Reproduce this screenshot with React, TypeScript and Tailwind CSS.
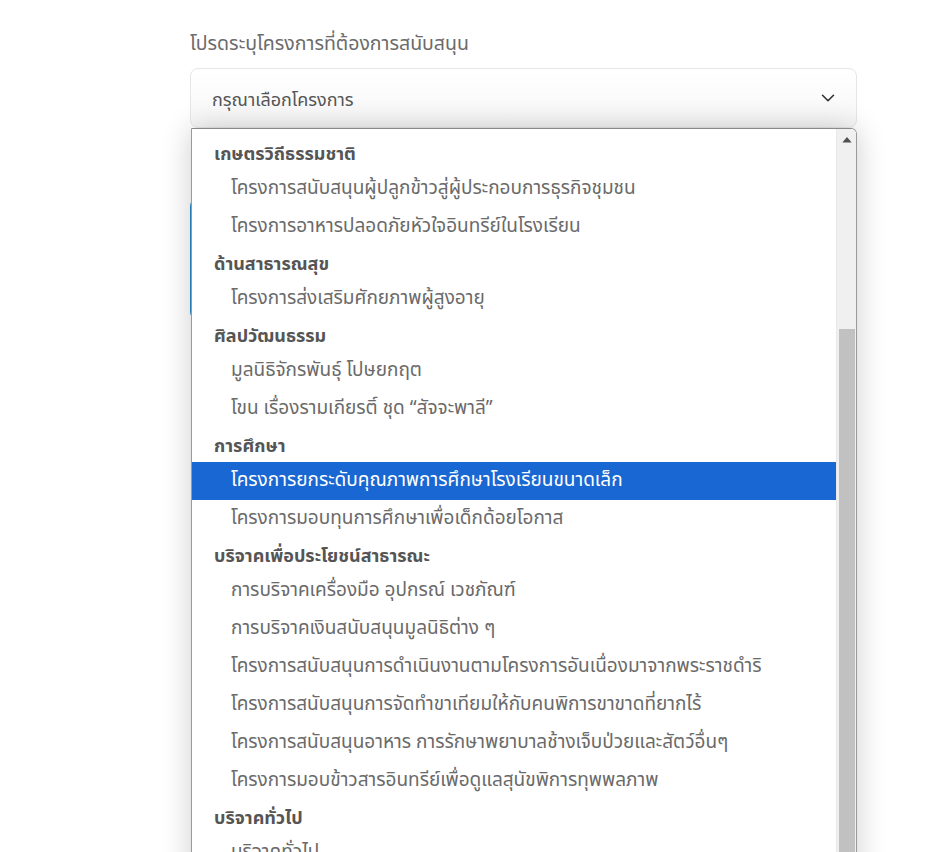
import { ChevronDown } from "lucide-react";

const groups: { title: string; items: string[] }[] = [
  {
    title: "เกษตรวิถีธรรมชาติ",
    items: [
      "โครงการสนับสนุนผู้ปลูกข้าวสู่ผู้ประกอบการธุรกิจชุมชน",
      "โครงการอาหารปลอดภัยหัวใจอินทรีย์ในโรงเรียน",
    ],
  },
  { title: "ด้านสาธารณสุข", items: ["โครงการส่งเสริมศักยภาพผู้สูงอายุ"] },
  {
    title: "ศิลปวัฒนธรรม",
    items: ["มูลนิธิจักรพันธุ์ โปษยกฤต", "โขน เรื่องรามเกียรติ์ ชุด “สัจจะพาลี”"],
  },
  {
    title: "การศึกษา",
    items: [
      "โครงการยกระดับคุณภาพการศึกษาโรงเรียนขนาดเล็ก",
      "โครงการมอบทุนการศึกษาเพื่อเด็กด้อยโอกาส",
    ],
  },
  {
    title: "บริจาคเพื่อประโยชน์สาธารณะ",
    items: [
      "การบริจาคเครื่องมือ อุปกรณ์ เวชภัณฑ์",
      "การบริจาคเงินสนับสนุนมูลนิธิต่าง ๆ",
      "โครงการสนับสนุนการดำเนินงานตามโครงการอันเนื่องมาจากพระราชดำริ",
      "โครงการสนับสนุนการจัดทำขาเทียมให้กับคนพิการขาขาดที่ยากไร้",
      "โครงการสนับสนุนอาหาร การรักษาพยาบาลช้างเจ็บป่วยและสัตว์อื่นๆ",
      "โครงการมอบข้าวสารอินทรีย์เพื่อดูแลสุนัขพิการทุพพลภาพ",
    ],
  },
  { title: "บริจาคทั่วไป", items: ["บริจาคทั่วไป"] },
];

const selected = "โครงการยกระดับคุณภาพการศึกษาโรงเรียนขนาดเล็ก";

export default function App() {
  return (
    <div className="h-[852px] overflow-hidden bg-white font-['Noto_Sans_Thai','Noto_Sans',sans-serif]">
      <div className="ml-[190px] w-[667px] pt-[30px]">
        <p className="text-[19.5px] leading-[28px] text-[#6b6b6b]">โปรดระบุโครงการที่ต้องการสนับสนุน</p>

        <div className="mt-[10px] flex h-[60px] items-center justify-between rounded-lg border border-[#e6e6e6] bg-gradient-to-b from-white to-[#f7f7f7] pl-[21px] pr-[17px]">
          <span className="pt-[5px] text-[18px] text-[#555]">กรุณาเลือกโครงการ</span>
          <ChevronDown className="h-[22px] w-[22px] text-[#333]" strokeWidth={1.75} />
        </div>

        {/* dropdown + stuff behind it */}
        <div className="relative pt-[70px]">
          <div className="h-[122px] rounded-lg border border-[#2a86c8]" />

          <div className="absolute left-[1px] top-0 flex h-[760px] w-[666px] overflow-hidden rounded-tr-md border border-t-[#8a8a8a] border-x-[#9a9a9a] bg-white shadow-[0_0_30px_rgba(0,0,0,0.2)]">
            <div className="flex-1 pt-[7px]">
              {groups.map((g) => (
                <div key={g.title}>
                  <div className="h-[34px] pl-[22px] pt-[8px] text-[18px] font-bold leading-[22px] text-[#555]">
                    {g.title}
                  </div>
                  {g.items.map((it) => (
                    <div
                      key={it}
                      className={
                        it === selected
                          ? "flex h-[38px] items-center bg-[#1967d2] pl-[39px] text-[19px] text-white"
                          : "flex h-[38px] items-center pl-[39px] text-[19px] text-[#6a6a6a]"
                      }
                    >
                      {it}
                    </div>
                  ))}
                </div>
              ))}
            </div>
            {/* scrollbar */}
            <div className="flex w-[20px] flex-col items-center border-l border-[#e8e8e8] bg-[#f0f0f0]">
              <svg width="10" height="6" viewBox="0 0 10 6" className="mt-[8px]">
                <path d="M0 6 L5 0 L10 6 Z" fill="#505050" />
              </svg>
              <div className="mt-[186px] h-[600px] w-[16px] bg-[#c1c1c1]" />
            </div>
          </div>
        </div>
      </div>
    </div>
  );
}
